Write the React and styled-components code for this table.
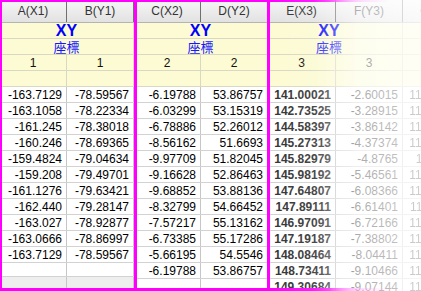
import React from 'react';
import styled, { createGlobalStyle } from 'styled-components';

const GlobalStyle = createGlobalStyle`
    html, body {
        margin: 0;
        padding: 0;
        background: #fff;
    }
    body {
        font-family: "Liberation Sans", Arial, sans-serif;
        overflow: hidden;
    }
`;

const Sheet = styled.div`
    display: flex;
    width: 421px;
    height: 291px;
    overflow: hidden;
    background: #fff;
`;

const Group = styled.div`
    position: relative;
    display: flex;
    flex-direction: column;
    flex: none;
    height: 291px;

    &::after {
        content: '';
        display: ${(p) => (p.$plain ? 'none' : 'block')};
        position: absolute;
        top: -1px;
        bottom: 0;
        left: ${(p) => p.$l || 0}px;
        right: ${(p) => p.$r || 0}px;
        border: 3px solid #ff00ff;
        ${(p) =>
            p.$fade &&
            'border-image: linear-gradient(to right, #ff00ff 0%, #ff00ff 45%, rgba(255,0,255,0.35) 70%, rgba(255,0,255,0) 92%) 1;'}
        pointer-events: none;
        z-index: 2;
    }
`;

const Faded = styled.div`
    position: relative;
    display: flex;
    flex: none;
    width: 153px;
    height: 291px;
    overflow: hidden;
    filter: blur(0.5px);

    &::after {
        content: '';
        position: absolute;
        inset: 0;
        background: linear-gradient(
            to right,
            rgba(255, 255, 255, 0) 0%,
            rgba(255, 255, 255, 0.1) 30%,
            rgba(255, 255, 255, 0.62) 58%,
            rgba(255, 255, 255, 0.78) 100%
        );
        pointer-events: none;
        z-index: 3;
    }
`;

const HeadRow = styled.div`
    display: flex;
    height: 23px;
    box-sizing: border-box;
    border-bottom: 1px solid #b4b4b4;
    background: linear-gradient(#f6f6f6, #e2e2e2);
`;

const HeadCell = styled.div`
    flex: none;
    width: ${(p) => p.$w}px;
    box-sizing: border-box;
    border-right: 1px solid #707070;
    text-align: center;
    font-size: 12px;
    line-height: 22px;
    color: #333;
    white-space: nowrap;
    overflow: hidden;
`;

const MetaRow = styled.div`
    display: flex;
    height: 16px;
    box-sizing: border-box;
    border-bottom: 1px solid #d9d8c2;
    background: #fcfbd3;
`;

const MetaCell = styled.div`
    flex: none;
    width: ${(p) => p.$w}px;
    height: 15px;
    box-sizing: border-box;
    border-right: 1px solid #d9d8c2;
    text-align: center;
    font-size: 12px;
    line-height: 16px;
    color: #111;
    white-space: nowrap;
`;

const Title = styled(MetaCell)`
    font-size: 16px;
    font-weight: bold;
    line-height: 16px;
    color: #0000ff;
    padding-right: ${(p) => p.$shift || 0}px;
`;

const Label = styled(MetaCell)`
    font-family: "Noto Sans CJK TC", "Noto Sans CJK SC", sans-serif;
    font-size: 13px;
    line-height: 15px;
    color: #1717ff;
    padding-right: ${(p) => p.$shift || 0}px;
`;

const DataRow = styled.div`
    display: flex;
    height: 16px;
    box-sizing: border-box;
    border-bottom: 1px solid #d2d2d2;
    background: ${(p) => (p.$shade ? '#eeeeee' : '#fff')};
`;

const DataCell = styled.div`
    flex: none;
    width: ${(p) => p.$w}px;
    box-sizing: border-box;
    border-right: 1px solid #c6c6c6;
    padding-right: 4px;
    text-align: right;
    font-size: 12px;
    line-height: 16px;
    color: ${(p) => p.$color || '#000'};
    font-weight: ${(p) => (p.$bold ? 'bold' : 'normal')};
    white-space: nowrap;
    overflow: hidden;
`;

const A = ['-163.7129', '-163.1058', '-161.245', '-160.246', '-159.4824', '-159.208', '-161.1276', '-162.440', '-163.027', '-163.0666', '-163.7129'];
const B = ['-78.59567', '-78.22334', '-78.38018', '-78.69365', '-79.04634', '-79.49701', '-79.63421', '-79.28147', '-78.92877', '-78.86997', '-78.59567'];
const C = ['-6.19788', '-6.03299', '-6.78886', '-8.56162', '-9.97709', '-9.16628', '-9.68852', '-8.32799', '-7.57217', '-6.73385', '-5.66195', '-6.19788'];
const D = ['53.86757', '53.15319', '52.26012', '51.6693', '51.82045', '52.86463', '53.88136', '54.66452', '55.13162', '55.17286', '54.5546', '53.86757'];
const E = ['141.00021', '142.73525', '144.58397', '145.27313', '145.82979', '145.98192', '147.64807', '147.89111', '146.97091', '147.19187', '148.08464', '148.73411', '149.30684'];
const F = ['-2.60015', '-3.28915', '-3.86142', '-4.37374', '-4.8765', '-5.46561', '-6.08366', '-6.61401', '-6.72166', '-7.38802', '-8.04411', '-9.10466', '-9.07144'];
const G = ['118.37402', '117.92615', '116.48213', '115.30947', '114.5526', '113.87021', '112.64138', '111.90572', '112.38841', '113.02769', '114.16605', '115.44910', '116.21037'];

function Panel({ cols, title, label, shift, rows, extras = [], ...rest }) {
    const total = cols.reduce((s, c) => s + c.w, 0);
    return (
        <Group {...rest}>
            <HeadRow>
                {cols.map((c) => (
                    <HeadCell key={c.head} $w={c.w}>
                        {c.head}
                    </HeadCell>
                ))}
            </HeadRow>
            <MetaRow>
                <Title $w={total} $shift={shift}>{title}</Title>
            </MetaRow>
            <MetaRow>
                <Label $w={total} $shift={shift}>{label}</Label>
            </MetaRow>
            <MetaRow>
                {cols.map((c) => (
                    <MetaCell key={c.head} $w={c.w}>
                        {c.num}
                    </MetaCell>
                ))}
            </MetaRow>
            <MetaRow>
                {cols.map((c) => (
                    <MetaCell key={c.head} $w={c.w} />
                ))}
            </MetaRow>
            {Array.from({ length: rows }).map((_, i) => (
                <DataRow key={i}>
                    {cols.map((c) => (
                        <DataCell key={c.head} $w={c.w} $bold={c.bold} $color={c.color}>
                            {c.data[i]}
                        </DataCell>
                    ))}
                </DataRow>
            ))}
            {extras.map((shade, i) => (
                <DataRow key={'x' + i} $shade={shade}>
                    {cols.map((c) => (
                        <DataCell key={c.head} $w={c.w} />
                    ))}
                </DataRow>
            ))}
        </Group>
    );
}

export default function App() {
    return (
        <>
            <GlobalStyle />
            <Sheet>
                <Panel
                    $l={-1}
                    $r={-3}
                    title="XY"
                    label="座標"
                    rows={11}
                    extras={[false, true]}
                    cols={[
                        { head: 'A(X1)', w: 67, num: '1', data: A },
                        { head: 'B(Y1)', w: 67, num: '1', data: B },
                    ]}
                />
                <Panel
                    $l={0}
                    $r={-2}
                    title="XY"
                    label="座標"
                    rows={12}
                    extras={[false]}
                    cols={[
                        { head: 'C(X2)', w: 67, num: '2', data: C },
                        { head: 'D(Y2)', w: 67, num: '2', data: D },
                    ]}
                />
                <Faded>
                    <Panel
                        $l={-1}
                        $r={0}
                        $fade
                        title="XY"
                        label="座標"
                        shift={12}
                        rows={13}
                        cols={[
                            { head: 'E(X3)', w: 68, num: '3', data: E, bold: true, color: '#333' },
                            { head: 'F(Y3)', w: 67, num: '3', data: F, color: '#222' },
                        ]}
                    />
                    <Panel
                        $plain
                        title=""
                        label=""
                        rows={13}
                        cols={[{ head: 'G(X4)', w: 67, num: '4', data: G, color: '#222' }]}
                    />
                </Faded>
            </Sheet>
        </>
    );
}
